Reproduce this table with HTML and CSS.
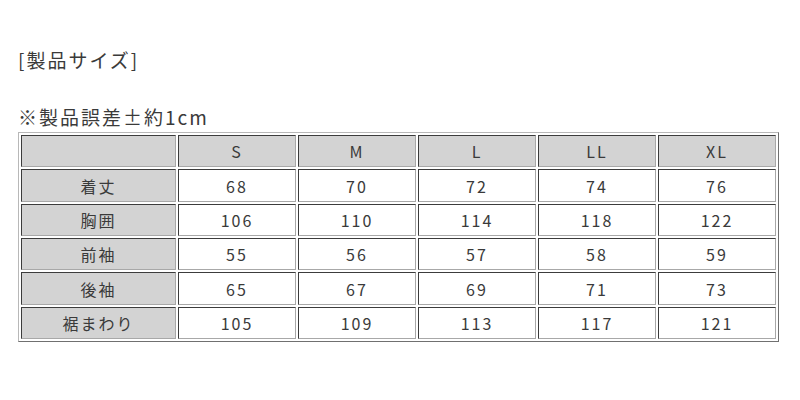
FILE: index.html
```html
<!DOCTYPE html>
<html lang="ja">
<head>
<meta charset="utf-8">
<link rel="stylesheet" href="styles.css">
</head>
<body>
<div class="wrap">
  <p class="title">[製品サイズ]</p>
  <p class="note">※製品誤差±約1cm</p>
  <table class="size">
    <tr><th class="head"></th><th>S</th><th>M</th><th>L</th><th>LL</th><th>XL</th></tr>
    <tr><th class="head">着丈</th><td>68</td><td>70</td><td>72</td><td>74</td><td>76</td></tr>
    <tr><th class="head">胸囲</th><td>106</td><td>110</td><td>114</td><td>118</td><td>122</td></tr>
    <tr><th class="head">前袖</th><td>55</td><td>56</td><td>57</td><td>58</td><td>59</td></tr>
    <tr><th class="head">後袖</th><td>65</td><td>67</td><td>69</td><td>71</td><td>73</td></tr>
    <tr><th class="head">裾まわり</th><td>105</td><td>109</td><td>113</td><td>117</td><td>121</td></tr>
  </table>
</div>
</body>
</html>
```
FILE: styles.css
```css
html, body {
  margin: 0;
  padding: 0;
  background: #fff;
}
body {
  font-family: "Noto Sans CJK JP", "Noto Sans", sans-serif;
  color: #3a3a3a;
}
.wrap {
  padding: 47px 18px 0 18px;
}
.title, .note {
  margin: 0;
  font-size: 19px;
  line-height: 26px;
  letter-spacing: 2px;
}
.note {
  margin-top: 31px;
  margin-bottom: 2px;
}
.size {
  width: 761px;
  border-collapse: separate;
  border-spacing: 2px;
  border: 1px solid;
  border-color: #b8b8b8 #707070 #707070 #b8b8b8;
  font-size: 16px;
  letter-spacing: 2px;
}
.size th, .size td {
  height: 30.35px;
  padding: 0;
  text-align: center;
  font-weight: normal;
  border: 1px solid;
  border-color: #3c3c3c #a8a8a8 #a8a8a8 #3c3c3c;
  line-height: 30px;
}
.size th {
  background: #d3d3d3;
  width: 116px;
}
.size th.head {
  width: 153px;
}
.size td {
  background: #fff;
}
```
